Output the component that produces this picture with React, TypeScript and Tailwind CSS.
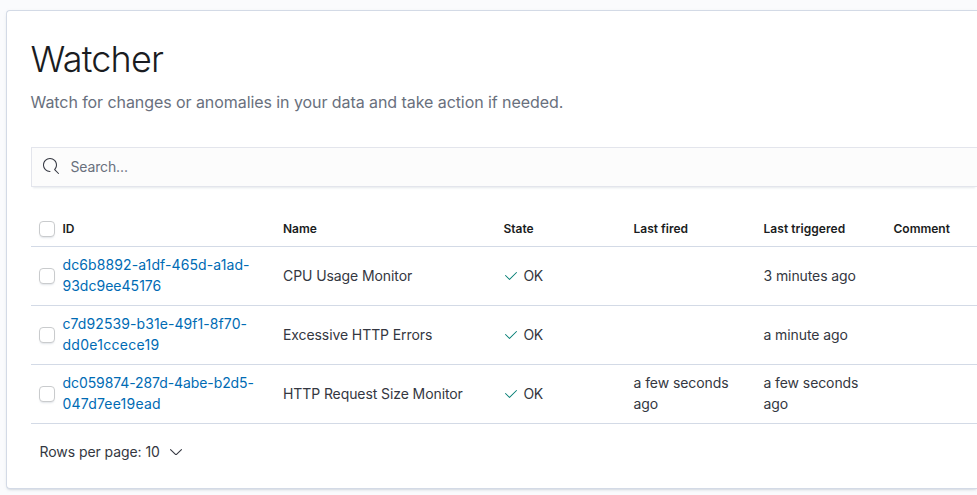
type IdLine = { text: string; spacing: string };
type Watch = { id: [IdLine, IdLine]; name: string; fired?: string; triggered: string };

const watches: Watch[] = [
  {
    id: [
      { text: 'dc6b8892-a1df-465d-a1ad-', spacing: 'tracking-[0.1px]' },
      { text: '93dc9ee45176', spacing: 'tracking-[0.02px]' },
    ],
    name: 'CPU Usage Monitor',
    triggered: '3 minutes ago',
  },
  {
    id: [
      { text: 'c7d92539-b31e-49f1-8f70-', spacing: 'tracking-[0.08px]' },
      { text: 'dd0e1ccece19', spacing: 'tracking-[0.28px]' },
    ],
    name: 'Excessive HTTP Errors',
    triggered: 'a minute ago',
  },
  {
    id: [
      { text: 'dc059874-287d-4abe-b2d5-', spacing: 'tracking-[-0.09px]' },
      { text: '047d7ee19ead', spacing: 'tracking-[0.2px]' },
    ],
    name: 'HTTP Request Size Monitor',
    fired: 'a few seconds ago',
    triggered: 'a few seconds ago',
  },
];

const columns = 'grid grid-cols-[31.5px_220.5px_220.5px_130px_130px_130px_1fr] items-center border-b border-[#d3dae6]';

function Checkbox() {
  return (
    <span
      role="checkbox"
      aria-checked="false"
      className="ml-2 block h-4 w-4 rounded-[4px] border border-[#c9cbcd] bg-white shadow-[0_2px_2px_-1px_rgba(152,162,179,0.3)]"
    />
  );
}

function SearchIcon() {
  return (
    <svg width="16" height="16" viewBox="0 0 16 16" fill="#343741" className="-mt-0.5">
      <path d="M11.271 11.978l3.872 3.873a.502.502 0 00.708 0 .502.502 0 000-.708l-3.565-3.564c2.38-2.747 2.267-6.923-.342-9.532-2.73-2.73-7.17-2.73-9.898 0-2.728 2.729-2.728 7.17 0 9.9a6.955 6.955 0 004.949 2.05.5.5 0 000-1 5.96 5.96 0 01-4.242-1.757 6.01 6.01 0 010-8.486 6.004 6.004 0 018.484 0 6.01 6.01 0 010 8.486.5.5 0 00.034.738z" />
    </svg>
  );
}

function CheckIcon() {
  return (
    <svg width="16" height="16" viewBox="0 0 16 16" fill="#017d73" className="-ml-px">
      <path d="M6.5 12a.502.502 0 01-.354-.146l-4-4a.502.502 0 01.708-.708L6.5 10.793l6.646-6.647a.502.502 0 01.708.708l-7 7A.502.502 0 016.5 12" />
    </svg>
  );
}

function ArrowDownIcon() {
  return (
    <svg width="16" height="16" viewBox="0 0 16 16" fill="#343741">
      <path d="M13.069 5.157L8.384 9.768a.546.546 0 01-.768 0L2.93 5.158a.552.552 0 00-.771 0 .53.53 0 000 .759l4.684 4.61a1.65 1.65 0 002.312 0l4.684-4.61a.53.53 0 000-.76.552.552 0 00-.771 0z" />
    </svg>
  );
}

export default function App() {
  return (
    <div className="h-[495px] overflow-hidden bg-[#fafbfd] pt-[10px] pl-[6px] font-['Inter','Liberation_Sans',sans-serif] text-[14px] leading-[21px] font-normal tracking-[-0.07px] text-[#343741]">
      <main className="h-[479px] rounded-l-[4px] border border-r-0 border-[#d3dae6] bg-white pt-6 pl-6 shadow-[0_2px_2px_-1px_rgba(152,162,179,0.3),0_1px_5px_-2px_rgba(152,162,179,0.3)]">
        <h1 className="-ml-[0.5px] text-[36px] leading-[48px] font-light tracking-[-0.8px] text-[#1a1c21]">Watcher</h1>
        <p className="mt-[7px] -ml-[0.5px] text-[16px] leading-6 tracking-[-0.07px] text-[#69707d]">
          Watch for changes or anomalies in your data and take action if needed.
        </p>
        <div className="mt-[33px] flex h-10 items-center border border-r-0 border-[#e3e5ec] bg-[#fcfcfc] pl-[11px] shadow-[0_3px_2px_-2px_rgba(152,162,179,0.25)]">
          <SearchIcon />
          <span className="ml-[11.5px] pb-0.5 tracking-[-0.14px] text-[#69707d]">Search...</span>
        </div>
        <div className={`${columns} mt-6 h-9 text-[12px] leading-[18px] font-semibold tracking-[0px] text-[#1a1c21]`}>
          <Checkbox />
          <span>ID</span>
          <span>Name</span>
          <span>State</span>
          <span>Last fired</span>
          <span className="tracking-[0.05px]">Last triggered</span>
          <span>Comment</span>
        </div>
        {watches.map((w) => (
          <div key={w.name} className={`${columns} h-[59px]`}>
            <Checkbox />
            <a className="flex flex-col pb-0.5 text-[#006bb4]">
              {w.id.map((line) => (
                <span key={line.text} className={line.spacing}>
                  {line.text}
                </span>
              ))}
            </a>
            <span className="pb-0.5 tracking-[-0.09px]">{w.name}</span>
            <span className="flex items-center gap-[5px]">
              <CheckIcon />
              <span className="pb-0.5 tracking-[-0.4px]">OK</span>
            </span>
            <span className="pr-6 pb-0.5">{w.fired}</span>
            <span className="pr-6 pb-0.5 tracking-[-0.09px]">{w.triggered}</span>
            <span />
          </div>
        ))}
        <div className="mt-[17px] ml-[8.5px] flex items-center gap-2">
          <span>Rows per page: 10</span>
          <ArrowDownIcon />
        </div>
      </main>
    </div>
  );
}
